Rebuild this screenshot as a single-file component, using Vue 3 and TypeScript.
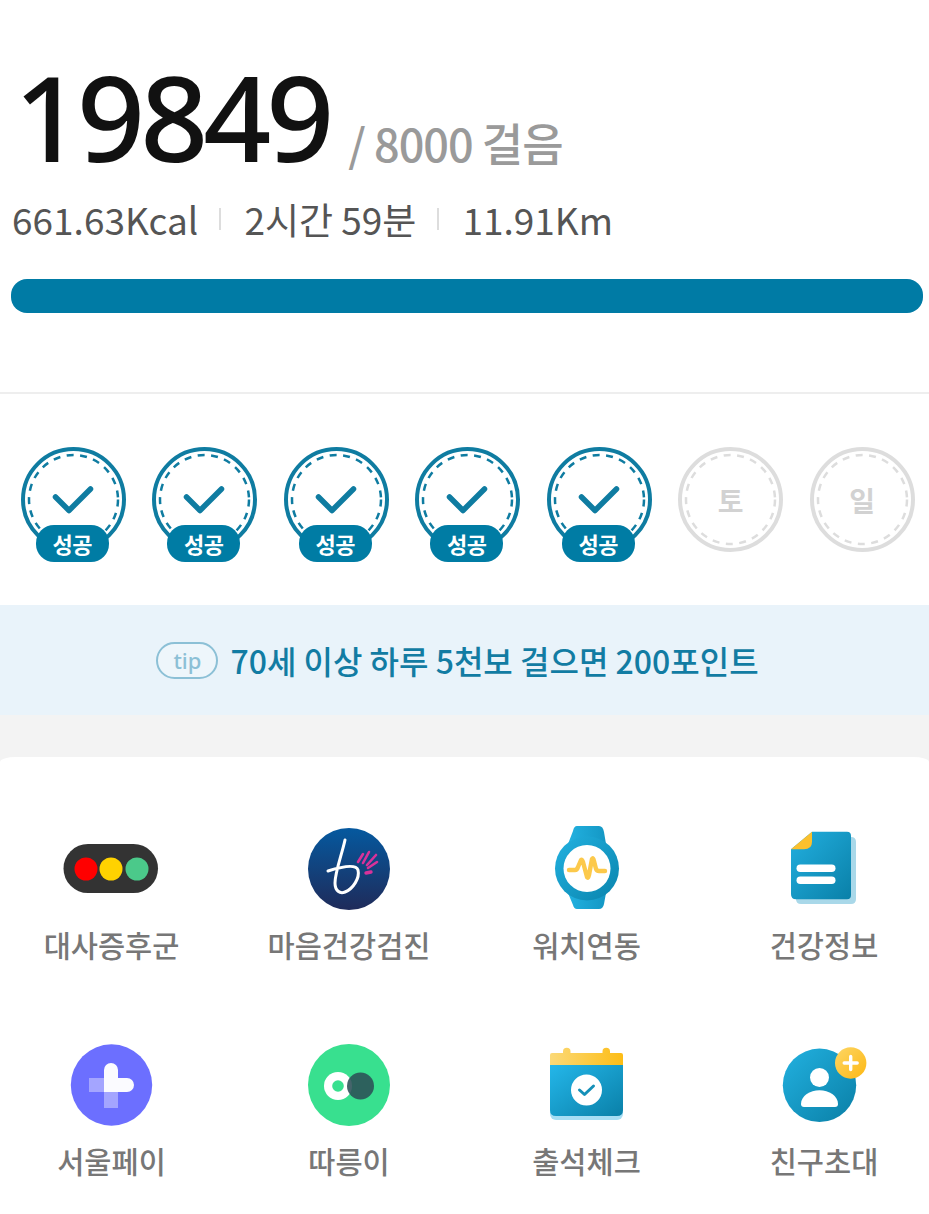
<script setup lang="ts">
const days = [
  { label: '월', done: true },
  { label: '화', done: true },
  { label: '수', done: true },
  { label: '목', done: true },
  { label: '금', done: true },
  { label: '토', done: false },
  { label: '일', done: false },
]
</script>

<template>
  <div class="page">
    <section class="summary">
      <div class="steps">
        <span class="count">19849</span>
        <span class="goal">/ 8000 걸음</span>
      </div>
      <div class="stats">
        <span>661.63Kcal</span>
        <i class="sep"></i>
        <span>2시간 59분</span>
        <i class="sep"></i>
        <span>11.91Km</span>
      </div>
      <div class="bar"></div>
    </section>

    <section class="days">
      <div v-for="d in days" :key="d.label" class="day">
        <svg class="ring" :class="{ on: d.done }" viewBox="0 0 105 105" width="105" height="105">
          <circle class="outer" cx="52.5" cy="52.5" r="50.5" />
          <circle class="dash" cx="52.5" cy="52.5" r="44.5" />
          <path v-if="d.done" class="tick" d="M34.5 50 L48 63.5 L69.5 42" />
        </svg>
        <span v-if="!d.done" class="name">{{ d.label }}</span>
        <span v-else class="badge">성공</span>
      </div>
    </section>

    <section class="tip">
      <span class="chip">tip</span>
      <span class="tiptext">70세 이상 하루 5천보 걸으면 200포인트</span>
    </section>

    <div class="lower">
      <section class="menu">
        <div class="item">
          <svg class="ico" viewBox="0 0 82 82" width="82" height="82">
            <rect x="-7.5" y="16" width="94.5" height="49" rx="24.5" fill="#333" />
            <circle cx="15" cy="41" r="11.5" fill="#ff0000" />
            <circle cx="40" cy="41" r="11.5" fill="#ffd200" />
            <circle cx="66" cy="41" r="11.5" fill="#4bc98a" />
          </svg>
          <span class="label">대사증후군</span>
        </div>

        <div class="item">
          <svg class="ico" viewBox="0 0 82 82" width="82" height="82">
            <defs>
              <linearGradient id="bg-b" x1="0" y1="0" x2="0" y2="1">
                <stop offset="0" stop-color="#05599f" />
                <stop offset="1" stop-color="#1f2b5a" />
              </linearGradient>
            </defs>
            <circle cx="41" cy="41" r="41" fill="url(#bg-b)" />
            <path d="M37 12 C34 26 27 44 27 55 C27 63 32 66 37 64 C45 61 52 50 50 42 C48 36 36 38 20 43" fill="none" stroke="#fff" stroke-width="3" stroke-linecap="round" />
            <path d="M50 34 L55 26 M55 35 L61 24 M59 37 L68 27 M60 40 L69 34" fill="none" stroke="#d8329a" stroke-width="2.6" stroke-linecap="round" />
            <path d="M58 45 L63 44" fill="none" stroke="#d8329a" stroke-width="3.4" stroke-linecap="round" />
          </svg>
          <span class="label">마음건강검진</span>
        </div>

        <div class="item">
          <svg class="ico" viewBox="0 0 82 82" width="82" height="82">
            <defs>
              <linearGradient id="bg-w" x1="0" y1="0" x2="1" y2="1">
                <stop offset="0" stop-color="#22b1e0" />
                <stop offset="1" stop-color="#0a84ad" />
              </linearGradient>
              <linearGradient id="bg-s" x1="0" y1="0" x2="1" y2="0">
                <stop offset="0" stop-color="#22b1e0" />
                <stop offset="1" stop-color="#1497c4" />
              </linearGradient>
            </defs>
            <path d="M31 -2 H53 Q57 -2 58 4 L60 16 H22 L27 3 Q28 -2 31 -2 Z" fill="url(#bg-s)" />
            <path d="M22 65 H60 L58 76 Q57 81 53 81 H31 Q28 81 27 77 Z" fill="url(#bg-s)" />
            <circle cx="41" cy="40.500" r="32" fill="url(#bg-w)" />
            <circle cx="41" cy="40.500" r="23.500" fill="#fff" />
            <path d="M23 42 H29 Q31 42 32 39 L35 32 Q36 31 37 34 L41 49 Q42 51 43 47 L46 31 Q47 29 48 33 L50 41 Q51 43 53 43 H59" fill="none" stroke="#fcc94b" stroke-width="4.400" stroke-linecap="round" stroke-linejoin="round" />
          </svg>
          <span class="label">워치연동</span>
        </div>

        <div class="item">
          <svg class="ico" viewBox="0 0 82 82" width="82" height="82">
            <defs>
              <linearGradient id="bg-d" x1="0" y1="0" x2="1" y2="1">
                <stop offset="0" stop-color="#22afdf" />
                <stop offset="1" stop-color="#0a80a8" />
              </linearGradient>
            </defs>
            <path d="M40 9 H68 Q73 9 73 14 V71 Q73 76 68 76 H18 Q13 76 13 71 V40 Z" fill="#a9d8e9" />
            <path d="M29 3.700 H64 Q68 3.700 68 7.700 V67 Q68 71.300 64 71.300 H13 Q8 71.300 8 66 V21.300 Z" fill="url(#bg-d)" />
            <path d="M8 21.300 L29 3.700 V14 Q29 21.300 21 21.300 Z" fill="#fbc02d" />
            <rect x="13.500" y="36.500" width="39" height="7.500" rx="3.750" fill="#fff" />
            <rect x="13.500" y="48.500" width="39" height="7.500" rx="3.750" fill="#fff" />
          </svg>
          <span class="label">건강정보</span>
        </div>

        <div class="item">
          <svg class="ico" viewBox="0 0 82 82" width="82" height="82">
            <circle cx="40.500" cy="41" r="40.700" fill="#6c6fff" />
            <path d="M18 34 H33 V48 H18 Z M33 48 H47 V64 H33 Z" fill="#fff" fill-opacity="0.38" />
            <path d="M33 26 A7 7 0 0 1 47 26 V34 H56 A7 7 0 0 1 56 48 H33 Z" fill="#fbfbff" />
          </svg>
          <span class="label">서울페이</span>
        </div>

        <div class="item">
          <svg class="ico" viewBox="0 0 82 82" width="82" height="82">
            <circle cx="41" cy="41" r="41" fill="#38e08f" />
            <circle cx="30" cy="42" r="14" fill="#fff" />
            <circle cx="30" cy="42" r="5.800" fill="#38e08f" />
            <circle cx="52.500" cy="42" r="13.500" fill="#2b4f57" fill-opacity="0.88" />
          </svg>
          <span class="label">따릉이</span>
        </div>

        <div class="item">
          <svg class="ico" viewBox="0 0 82 82" width="82" height="82">
            <defs>
              <linearGradient id="bg-c" x1="0" y1="0" x2="1" y2="1">
                <stop offset="0" stop-color="#24b7ea" />
                <stop offset="1" stop-color="#0a80a8" />
              </linearGradient>
              <linearGradient id="bg-y" x1="0" y1="0" x2="1" y2="0">
                <stop offset="0" stop-color="#fbd977" />
                <stop offset="1" stop-color="#fdbd16" />
              </linearGradient>
            </defs>
            <rect x="4" y="40" width="73" height="36" rx="6" fill="#a6def4" />
            <path d="M4 20 H77 V66 Q77 72 71 72 H10 Q4 72 4 66 Z" fill="url(#bg-c)" />
            <path d="M17 9 V7.500 A3.600 3.600 0 0 1 24.500 7.500 V9 H56.500 V7.500 A3.600 3.600 0 0 1 64 7.500 V9 H75 Q77 9 77 11 V21 H4 V11 Q4 9 6 9 Z" fill="url(#bg-y)" />
            <circle cx="40.500" cy="46" r="15.500" fill="#fff" />
            <path d="M33.500 46 L38.500 50.500 L47.500 42" fill="none" stroke="#1590b8" stroke-width="3" stroke-linecap="round" stroke-linejoin="round" />
          </svg>
          <span class="label">출석체크</span>
        </div>

        <div class="item">
          <svg class="ico" viewBox="0 0 82 82" width="82" height="82">
            <defs>
              <linearGradient id="bg-f" x1="0" y1="0" x2="1" y2="1">
                <stop offset="0" stop-color="#22b1e0" />
                <stop offset="1" stop-color="#0a7fa6" />
              </linearGradient>
              <linearGradient id="bg-p" x1="0" y1="0" x2="1" y2="1">
                <stop offset="0" stop-color="#fdd666" />
                <stop offset="1" stop-color="#fdb813" />
              </linearGradient>
            </defs>
            <circle cx="36.500" cy="41.300" r="36.700" fill="url(#bg-f)" />
            <circle cx="36.500" cy="33.500" r="9.500" fill="#fff" />
            <path d="M18 60 C18 52 27 46.300 36.500 46.300 C46 46.300 55 52 55 60 C55 62 54 63 52 63 H21 C19 63 18 62 18 60 Z" fill="#fff" />
            <circle cx="67.700" cy="19" r="15.700" fill="url(#bg-p)" />
            <path d="M67.700 12.500 V25.500 M61.200 19 H74.200" fill="none" stroke="#fff" stroke-width="3.400" stroke-linecap="round" />
          </svg>
          <span class="label">친구초대</span>
        </div>
      </section>
    </div>
  </div>
</template>

<style>
html, body { margin: 0; background: #fff; }
</style>

<style scoped>
.page {
  width: 929px;
  height: 1214px;
  overflow: hidden;
  background: #fff;
  font-family: "Noto Sans CJK KR", "Noto Sans", sans-serif;
}
.summary {
  height: 394px;
  box-sizing: border-box;
  border-bottom: 2px solid #eee;
  padding: 53px 6px 0 11px;
}
.steps {
  display: flex;
  align-items: baseline;
  gap: 19px;
  padding-left: 3px;
  height: 126px;
}
.count {
  font-family: "Noto Sans", sans-serif;
  font-size: 119px;
  line-height: 126px;
  font-weight: 500;
  letter-spacing: -5px;
  color: #111;
}
.goal {
  font-size: 45px;
  line-height: 50px;
  color: #9a9a9a;
  letter-spacing: -1px;
  font-weight: 500;
}
.stats {
  display: flex;
  align-items: center;
  margin-top: 15px;
  margin-left: 1px;
  height: 50px;
  font-size: 37px;
  line-height: 50px;
  letter-spacing: 0;
  color: #555;
}
.sep {
  width: 2px;
  height: 22px;
  background: #ddd;
  margin: 0 23px 0 21px;
}
.bar {
  margin-top: 35px;
  height: 34px;
  width: 912px;
  border-radius: 16px;
  background: #007ba5;
}
.days {
  display: grid;
  grid-template-columns: repeat(7, 131.5px);
  padding: 53px 0 0 7.500px;
  height: 211px;
  box-sizing: border-box;
}
.day {
  position: relative;
  width: 105px;
  height: 105px;
  justify-self: center;
  display: flex;
  align-items: center;
  justify-content: center;
}
.ring {
  position: absolute;
  inset: 0;
}
.outer {
  fill: none;
  stroke: #ddd;
  stroke-width: 4;
}
.dash {
  fill: none;
  stroke: #ddd;
  stroke-width: 2.500;
  stroke-dasharray: 7 6.500;
}
.ring.on .outer { stroke: #0f7ca1; }
.ring.on .dash { stroke: #0f7ca1; }
.tick {
  fill: none;
  stroke: #0f7ca1;
  stroke-width: 5.500;
  stroke-linecap: round;
  stroke-linejoin: round;
}
.name {
  position: relative;
  font-size: 28px;
  font-weight: 700;
  color: #d2d2d2;
}
.badge {
  position: absolute;
  left: 15px;
  top: 78px;
  width: 73px;
  height: 37px;
  border-radius: 18px;
  background: #007ca4;
  color: #fff;
  font-size: 22px;
  font-weight: 700;
  line-height: 36px;
  text-align: center;
  letter-spacing: -0.5px;
}
.tip {
  height: 110px;
  box-sizing: border-box;
  padding-right: 14px;
  background: #e9f3fa;
  display: flex;
  align-items: center;
  justify-content: center;
  gap: 12px;
}
.chip {
  width: 62px;
  height: 37px;
  box-sizing: border-box;
  border: 2px solid #8cc0d6;
  border-radius: 19px;
  color: #8cc0d6;
  background: #eef6fb;
  font-family: "Noto Sans", sans-serif;
  font-size: 22px;
  font-weight: 500;
  line-height: 32px;
  text-align: center;
}
.tiptext {
  font-size: 32px;
  font-weight: 500;
  color: #127ca3;
  line-height: 44px;
}
.lower {
  background: #f3f3f3;
  padding-top: 42px;
}
.menu {
  background: #fff;
  border-radius: 16px 16px 0 0 / 5px 5px 0 0;
  display: grid;
  grid-template-columns: repeat(4, 133px);
  column-gap: 104.500px;
  padding: 71px 0 0 45px;
}
.item {
  height: 215.500px;
  display: flex;
  flex-direction: column;
  align-items: center;
}
.ico {
  overflow: visible;
  flex: none;
}
.label {
  margin-top: 13px;
  white-space: nowrap;
  font-size: 29.500px;
  line-height: 42px;
  font-weight: 500;
  color: #777;
}
</style>
